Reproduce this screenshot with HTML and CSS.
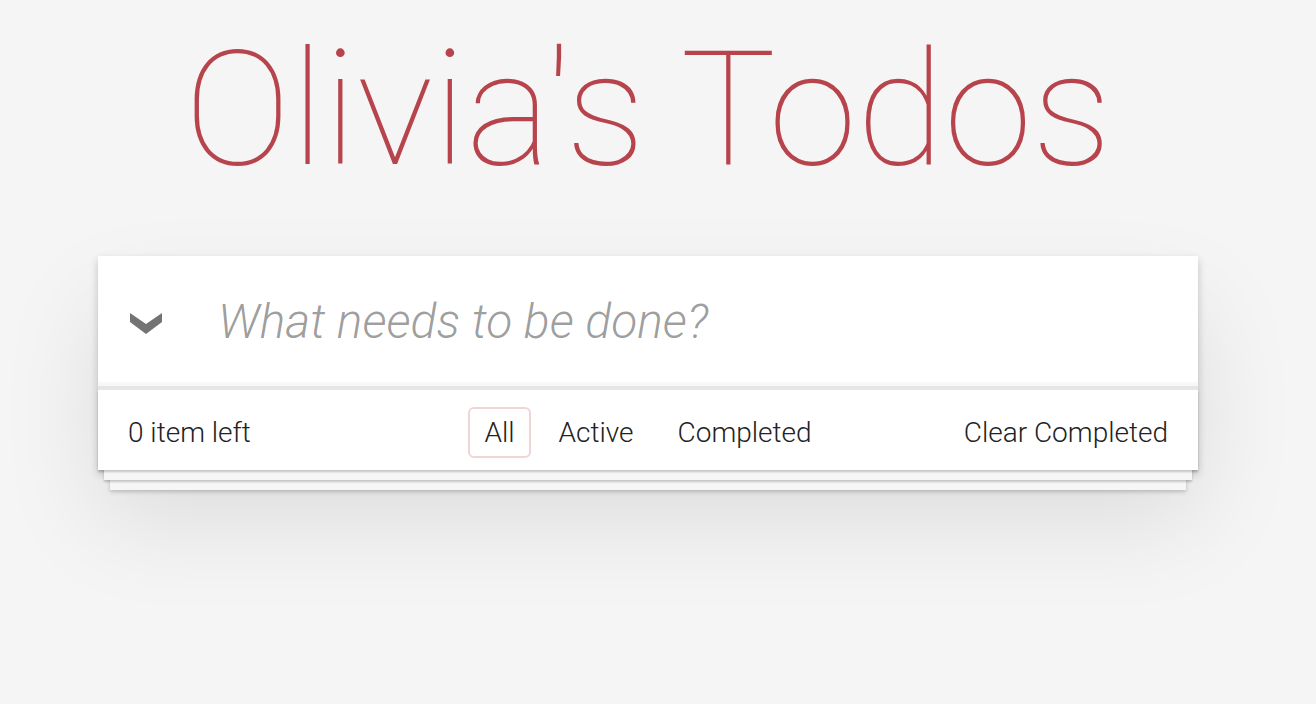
FILE: index.html
```html
<!DOCTYPE html>
<html lang="en">
<head>
<meta charset="utf-8">
<title>Olivia's Todos</title>
<link rel="stylesheet" href="styles.css">
</head>
<body>
<div class="page">
  <h1 class="title">Olivia's Todos</h1>
  <section class="todoapp">
    <div class="new-row">
      <div class="toggle-all">
        <svg class="chevron" width="32" height="21" viewBox="0 0 32 21" aria-hidden="true">
          <polygon points="0,0 16,11 32,0 32,9 16,21 0,9" fill="#737373"/>
        </svg>
      </div>
      <input class="new-todo" type="text" placeholder="What needs to be done?">
    </div>
    <footer class="footer">
      <span class="count">0 item left</span>
      <ul class="filters">
        <li><a class="filter selected" href="#/">All</a></li>
        <li><a class="filter" href="#/active">Active</a></li>
        <li><a class="filter" href="#/completed">Completed</a></li>
      </ul>
      <span class="clear">Clear Completed</span>
    </footer>
  </section>
</div>
</body>
</html>
```

FILE: styles.css
```css
html, body {
  margin: 0;
  padding: 0;
}

html {
  background: #f5f5f5;
}

body {
  background: #f5f5f5;
  font-family: Roboto, "Liberation Sans", sans-serif;
  font-weight: 300;
  color: #222;
  padding-right: 20px;
  min-height: 100vh;
  overflow: hidden;
}

.page {
  width: 1100px;
  margin: 0 auto;
  padding-bottom: 200px;
}

.title {
  margin: 0;
  padding: 30px 0 66px;
  font-size: 160px;
  line-height: 160px;
  font-weight: 100;
  color: #b7444c;
  text-align: center;
}

.todoapp {
  background: #fff;
  position: relative;
  box-shadow: 0 4px 8px 0 rgba(0, 0, 0, 0.2), 0 50px 100px 0 rgba(0, 0, 0, 0.1);
}

.new-row {
  display: flex;
  align-items: center;
  height: 130px;
  box-shadow: inset 0 -4px 2px rgba(0, 0, 0, 0.03);
}

.toggle-all {
  width: 120px;
  flex: 0 0 120px;
  display: flex;
  align-items: center;
}

.chevron {
  display: block;
  margin-left: 32px;
  margin-top: 5px;
}

.new-todo {
  flex: 1;
  border: none;
  outline: none;
  background: transparent;
  padding: 0 32px 0 0;
  margin: 0;
  height: 67px;
  font-family: inherit;
  font-size: 48px;
  font-weight: 300;
  font-style: italic;
  color: #333;
}

.new-todo::placeholder {
  color: rgba(0, 0, 0, 0.4);
  font-style: italic;
  font-weight: 300;
}

.footer {
  position: relative;
  border-top: 4px solid #e6e6e6;
  padding: 17px 30px 23px;
  height: 40px;
  display: grid;
  grid-template-columns: 1fr auto 1fr;
  align-items: center;
  font-size: 28px;
  line-height: 40px;
}

.footer::before {
  content: "";
  position: absolute;
  left: 0;
  right: 0;
  bottom: 0;
  height: 80px;
  box-shadow:
    0 2px 2px rgba(0, 0, 0, 0.2),
    0 16px 0 -6px #f6f6f6,
    0 18px 2px -6px rgba(0, 0, 0, 0.2),
    0 32px 0 -12px #f6f6f6,
    0 34px 4px -12px rgba(0, 0, 0, 0.2);
}

.count,
.filters,
.clear {
  position: relative;
  z-index: 1;
}

.clear {
  justify-self: end;
}

.filters {
  list-style: none;
  margin: 0;
  padding: 0;
  display: flex;
}

.filter {
  display: block;
  margin: 0 6px;
  padding: 6px 14px;
  line-height: 35px;
  border: 2px solid transparent;
  border-radius: 6px;
  color: inherit;
  text-decoration: none;
}

.filter.selected {
  border-color: rgba(175, 47, 47, 0.2);
}
```
